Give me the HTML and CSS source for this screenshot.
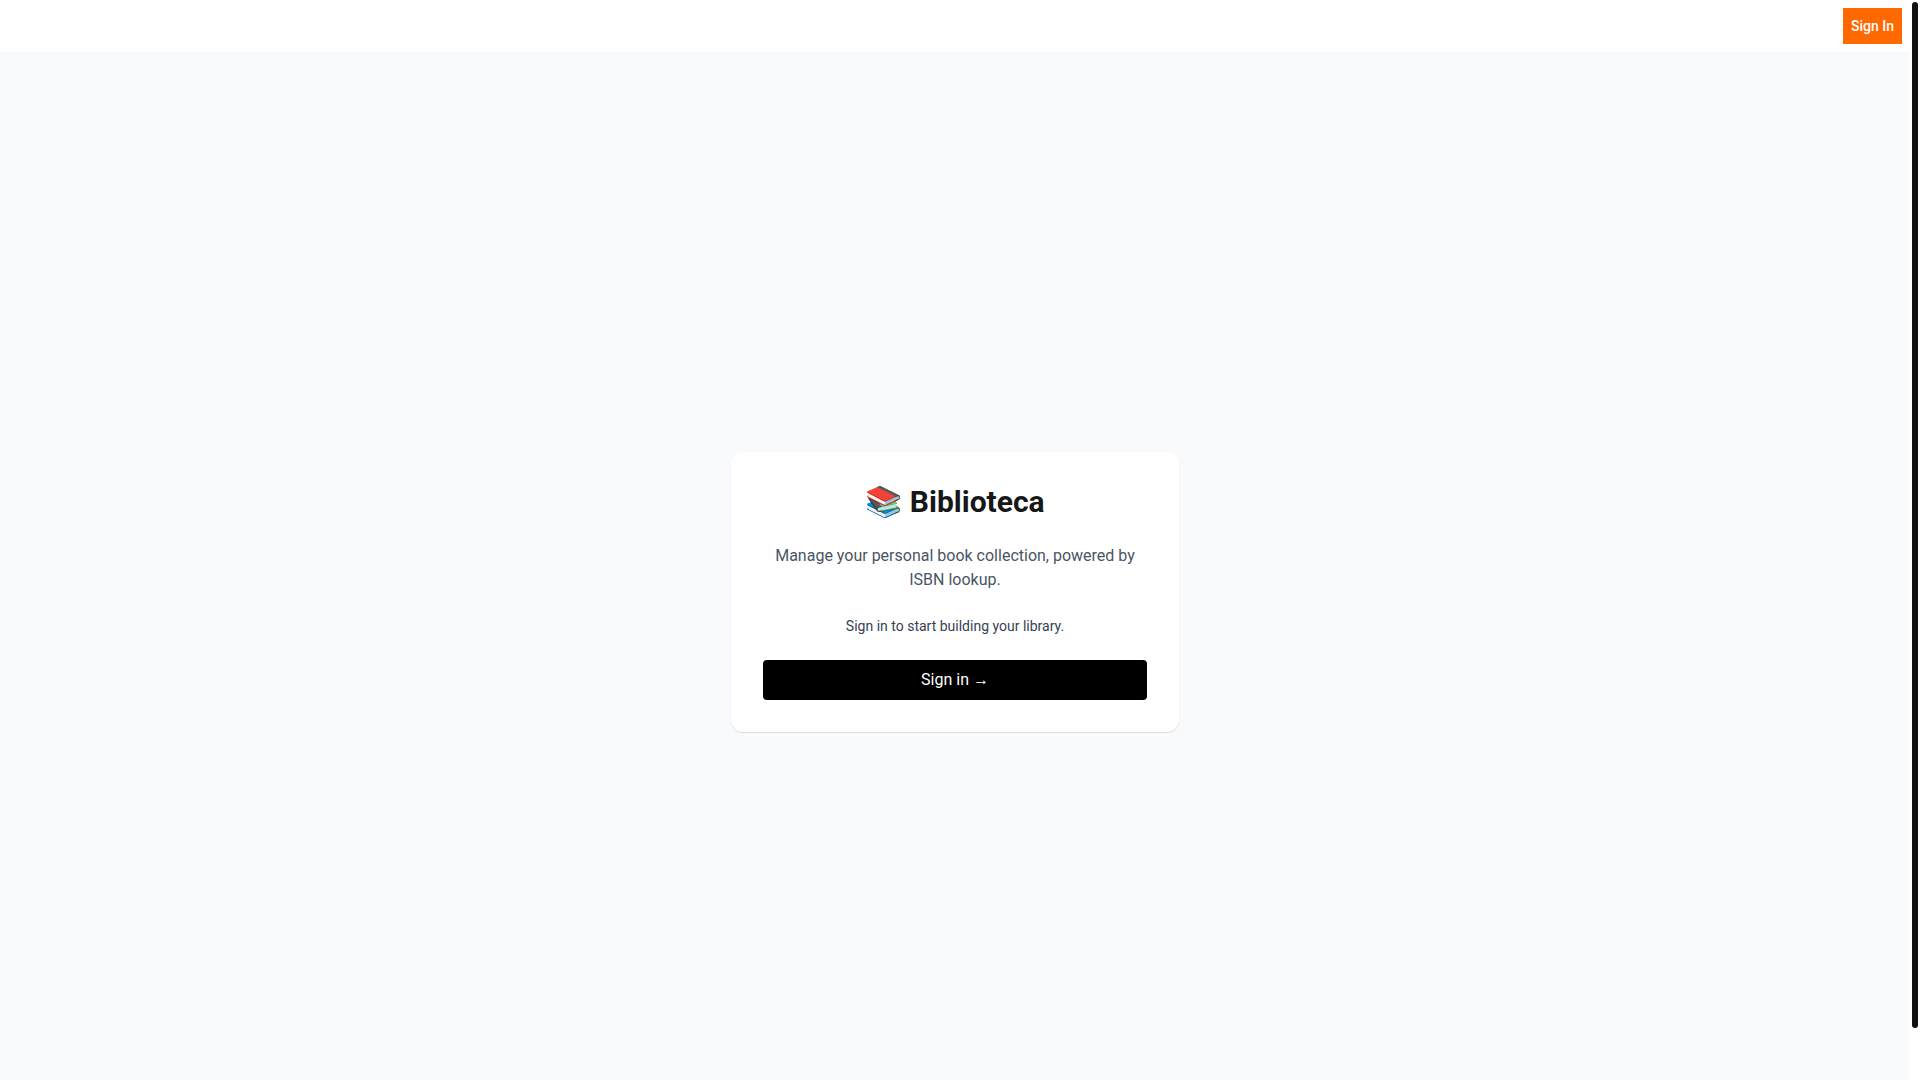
FILE: index.html
```html
<!DOCTYPE html>
<html lang="en">
<head>
    <meta charset="UTF-8">
    <meta name="viewport" content="width=device-width, initial-scale=1">
    <title>Biblioteca</title>
    <link rel="stylesheet" href="styles.css">
</head>
<body>
    <div class="scroller">
        <header class="header">
            <button type="button" class="header-button">Sign In</button>
        </header>

        <main class="page">
            <section class="card">
                <h1 class="title">📚 Biblioteca</h1>
                <p class="intro">Manage your personal book collection, powered by ISBN lookup.</p>
                <p class="hint">Sign in to start building your library.</p>
                <a class="sign-in" href="#">Sign in →</a>
            </section>
        </main>
    </div>

    <div class="scrollbar" aria-hidden="true">
        <div class="scrollbar-thumb"></div>
    </div>
</body>
</html>
```
FILE: styles.css
```css
* {
    box-sizing: border-box;
    margin: 0;
    padding: 0;
}

body {
    display: flex;
    height: 100vh;
    background: #fff;
    color: #171717;
    font-family: Roboto, "Liberation Sans", sans-serif;
    font-size: 16px;
    line-height: 24px;
}

/* Scroll area, the native scrollbar is replaced by .scrollbar */
.scroller {
    flex: 1;
    overflow-y: auto;
    scrollbar-width: none;
}

.scrollbar {
    width: 10px;
    padding: 2px;
    background: #fff;
}

/* The page is one header taller than the window */
.scrollbar-thumb {
    height: calc(100vh - 54px);
    border-radius: 3px;
    background: #111;
}

/* Top bar */
.header {
    display: flex;
    justify-content: flex-end;
    padding: 8px;
}

.header-button {
    padding: 8px;
    border: none;
    background: #ff6900;
    color: #fff;
    font-family: inherit;
    font-size: 14px;
    font-weight: 500;
    line-height: 20px;
    cursor: pointer;
}

/* Landing page */
.page {
    display: flex;
    align-items: center;
    justify-content: center;
    min-height: 100vh;
    padding: 16px;
    background: #f9fafb;
}

.card {
    display: flex;
    flex-direction: column;
    gap: 24px;
    width: 100%;
    max-width: 448px;
    padding: 32px;
    border-radius: 12px;
    background: #fff;
    box-shadow: 0 1px 1px rgba(0, 0, 0, 0.12);
    text-align: center;
}

.title {
    font-size: 30px;
    font-weight: 700;
    line-height: 36px;
}

.intro {
    color: #4a5565;
}

.hint {
    color: #364153;
    font-size: 14px;
    line-height: 20px;
}

.sign-in {
    padding: 8px 16px;
    border-radius: 4px;
    background: #000;
    color: #fff;
    text-decoration: none;
}
```
